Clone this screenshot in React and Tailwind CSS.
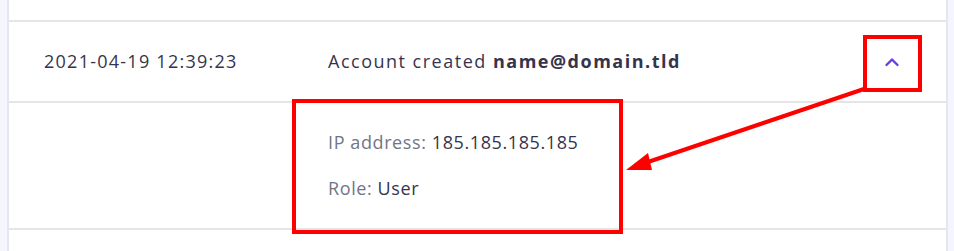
import React from "react";

export default function App() {
  return (
    <div className="relative w-[954px] h-[251px] bg-[#f4f5ff] overflow-hidden" style={{ fontFamily: "'Open Sans', sans-serif" }}>
      <div className="ml-[7px] mr-[6px] h-full bg-white border-l-2 border-r-2 border-[#e6e6ee] flex flex-col">
        <div className="h-[20px]" />
        <div className="border-t-2 border-[#e5e5e5] h-[81px] flex items-center text-[18px] text-[#36344d]">
          <div className="w-[319px] pl-[35px] tracking-[1.25px]">2021-04-19 12:39:23</div>
          <div className="flex-1 tracking-[1.5px]">
            Account created <span className="font-bold">name@domain.tld</span>
          </div>
          <div className="w-[80px] flex justify-center pr-[28px]">
            <svg width="16" height="10" viewBox="0 0 16 10" fill="none">
              <path d="M2.5 8 L8 2.5 L13.5 8" stroke="#673de6" strokeWidth="2.4" strokeLinecap="round" strokeLinejoin="round" />
            </svg>
          </div>
        </div>
        <div className="border-t-2 border-[#e5e5e5] h-[127px] pl-[319px] pt-[26px] text-[18px] tracking-[0.6px] flex flex-col gap-[19px]">
          <div><span className="text-[#727586]">IP address: </span><span className="text-[#36344d]">185.185.185.185</span></div>
          <div><span className="text-[#727586]">Role: </span><span className="text-[#36344d]">User</span></div>
        </div>
        <div className="border-t-2 border-[#e5e5e5] flex-1" />
      </div>

      {/* annotations */}
      <div className="absolute left-[863px] top-[35px] w-[59px] h-[57px] border-[4px] border-[#ff0000]" />
      <div className="absolute left-[292px] top-[99px] w-[331px] h-[135px] border-[4px] border-[#ff0000]" />
      <svg className="absolute left-0 top-0" width="954" height="251" viewBox="0 0 954 251">
        <line x1="864" y1="89" x2="645" y2="163" stroke="#ff0000" strokeWidth="4" />
        <polygon points="626,170 648,153 652,170" fill="#ff0000" />
      </svg>
    </div>
  );
}
